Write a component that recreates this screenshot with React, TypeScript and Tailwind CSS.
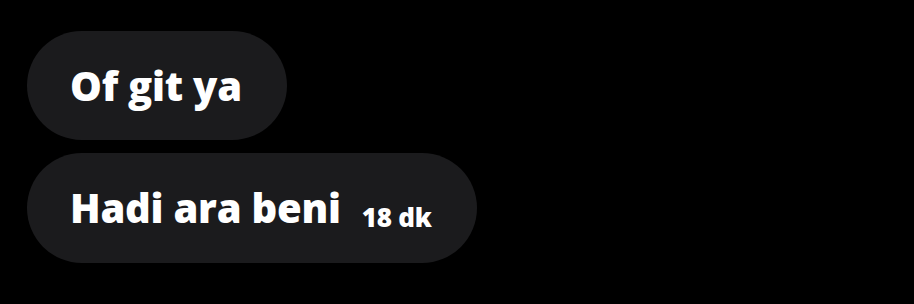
import React from 'react';

const font = { fontFamily: '"Open Sans", "Liberation Sans", sans-serif' };

const App: React.FC = () => {
  return (
    <div className="w-[914px] h-[304px] bg-black overflow-hidden" style={font}>
      <div className="flex flex-col items-start gap-[13px] pl-[27px] pt-[31px]">
        {/* first bubble */}
        <div className="bg-[#1b1b1d] rounded-[55px] h-[109px] pl-[43px] pr-[45px] flex items-center">
          <span className="text-white font-extrabold text-[40px] leading-none tracking-[-0.25px]">Of git ya</span>
        </div>

        {/* second bubble with time */}
        <div className="bg-[#1b1b1d] rounded-[55px] h-[110px] pl-[43px] pr-[45px] flex items-center">
          <span className="text-white font-extrabold text-[40px] leading-none tracking-[-0.25px]">Hadi ara beni</span>
          <span className="text-white font-extrabold text-[26px] leading-none tracking-[-0.25px] ml-[21px] mt-[18px]">18 dk</span>
        </div>
      </div>
    </div>
  );
};

export default App;
